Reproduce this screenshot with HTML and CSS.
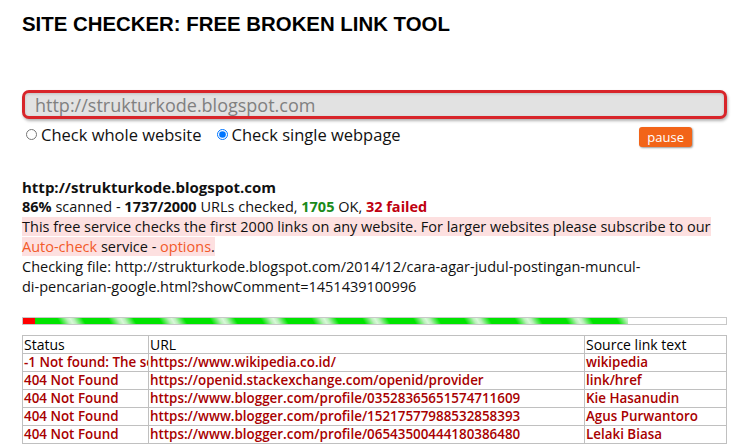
FILE: index.html
```html
<!DOCTYPE html>
<html>
<head>
    <meta charset="UTF-8">
    <title>Site Checker: Free Broken Link Tool</title>
    <link rel="stylesheet" href="styles.css">
</head>
<body>
    <div class="page">
        <h1 class="title">SITE CHECKER: FREE BROKEN LINK TOOL</h1>

        <div class="url-box">
            <input class="url-input" type="text" placeholder="http://strukturkode.blogspot.com">
        </div>

        <div class="options">
            <label class="option"><input type="radio" name="mode"> Check whole website</label>
            <label class="option"><input type="radio" name="mode" checked> Check single webpage</label>
            <button class="pause">pause</button>
        </div>

        <div class="info">
            <div class="site"><b>http://strukturkode.blogspot.com</b></div>
            <div><b>86%</b> scanned - <b>1737/2000</b> URLs checked, <b class="ok">1705</b> OK, <b class="fail">32 failed</b></div>
            <div><span class="notice">This free service checks the first 2000 links on any website. For larger websites please subscribe to our <a href="#">Auto-check</a> service - <a href="#">options</a>.</span></div>
            <div>Checking file: http://strukturkode.blogspot.com/2014/12/cara-agar-judul-postingan-muncul-<br>di-pencarian-google.html?showComment=1451439100996</div>
        </div>

        <div class="progress">
            <div class="bar-fail"></div>
            <div class="bar-ok"></div>
        </div>

        <table class="results">
            <tr class="head">
                <td class="col-status">Status</td>
                <td class="col-url">URL</td>
                <td class="col-src">Source link text</td>
            </tr>
            <tr>
                <td>-1 Not found: The server name or address could not be resolved</td>
                <td>https://www.wikipedia.co.id/</td>
                <td>wikipedia</td>
            </tr>
            <tr>
                <td>404 Not Found</td>
                <td>https://openid.stackexchange.com/openid/provider</td>
                <td>link/href</td>
            </tr>
            <tr>
                <td>404 Not Found</td>
                <td>https://www.blogger.com/profile/03528365651574711609</td>
                <td>Kie Hasanudin</td>
            </tr>
            <tr>
                <td>404 Not Found</td>
                <td>https://www.blogger.com/profile/15217577988532858393</td>
                <td>Agus Purwantoro</td>
            </tr>
            <tr>
                <td>404 Not Found</td>
                <td>https://www.blogger.com/profile/06543500444180386480</td>
                <td>Lelaki Biasa</td>
            </tr>
        </table>
    </div>
</body>
</html>
```

FILE: styles.css
```css
body {
    margin: 0;
    font-family: "Open Sans", Arial, sans-serif;
    color: #111;
    background: #fff;
}

.page {
    padding: 0 8px 0 22px;
}

.title {
    margin: 0;
    padding-top: 13px;
    height: 77px;
    font-family: "Liberation Sans", Arial, sans-serif;
    font-size: 20.4px;
    font-weight: bold;
    color: #000;
}

.url-box {
    display: flex;
}

.url-input {
    flex: 1;
    height: 23px;
    padding: 0 10px;
    border: 3px solid #d8252a;
    border-radius: 7px;
    background: #e2e2e2;
    box-shadow: 1px 2px 3px rgba(0, 0, 0, 0.3), inset 0 1px 3px rgba(0, 0, 0, 0.15);
    font-family: "Open Sans", Arial, sans-serif;
    font-size: 18px;
    color: #777;
    outline: none;
}

.url-input::placeholder {
    color: #808080;
}

.options {
    display: flex;
    align-items: center;
    height: 30px;
    font-size: 16.5px;
}

.option {
    display: flex;
    align-items: center;
    margin-right: 11px;
}

.option input {
    margin: 1px 4px 0 4px;
    width: 11px;
    height: 11px;
}

.pause {
    margin-left: auto;
    margin-right: 35px;
    margin-top: 5px;
    padding: 0 8px;
    height: 20px;
    border: none;
    border-radius: 3px;
    background: #f26418;
    box-shadow: 1px 1px 2px rgba(0, 0, 0, 0.4);
    color: #fff;
    font-family: "Open Sans", Arial, sans-serif;
    font-size: 13px;
}

.info {
    margin-top: 28px;
    font-size: 14.5px;
    line-height: 20px;
}

.site {
    font-size: 15px;
}

.ok {
    color: #1a8a1a;
}

.fail {
    color: #c00010;
}

.notice {
    background: #fde0e0;
}

.notice a {
    color: #f25a2a;
    text-decoration: none;
}

.progress {
    display: flex;
    height: 6px;
    margin-top: 20px;
    border: 1px solid #c8c8c8;
}

.bar-fail {
    width: 12px;
    background: #ff0000;
}

.bar-ok {
    width: 593px;
    background: repeating-linear-gradient(60deg, #00e400 0, #00e400 22px, #b8f0b8 30px, #d8f8d8 33px, #b8f0b8 36px, #00e400 44px);
}

.results {
    width: 100%;
    margin-top: 10px;
    border-collapse: collapse;
    table-layout: fixed;
    font-size: 13.4px;
    font-weight: 600;
    color: #a80000;
}

.results td {
    border: 1px solid #c0c0c0;
    padding: 0 1px;
    height: 17px;
    line-height: 17px;
    white-space: nowrap;
    overflow: hidden;
}

.results .head td {
    color: #000;
    font-weight: normal;
    font-size: 14px;
}

.col-status {
    width: 123px;
}

.col-src {
    width: 139px;
}
```
